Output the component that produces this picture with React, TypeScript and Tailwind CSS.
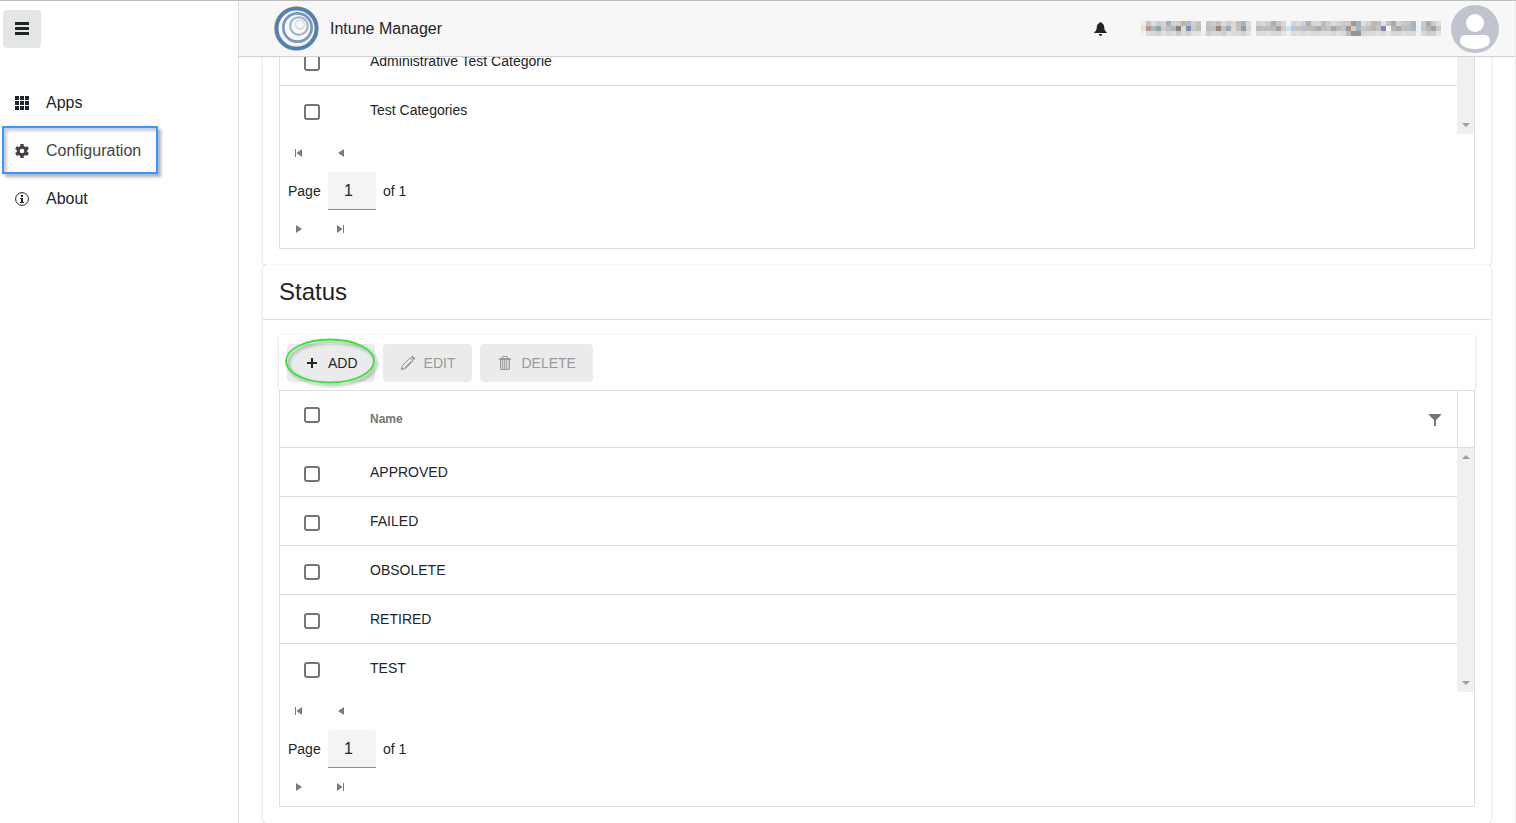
import { useState } from 'react';

const categories = ['Administrative Test Categorie', 'Test Categories'];
const statuses = ['APPROVED', 'FAILED', 'OBSOLETE', 'RETIRED', 'TEST'];

// Blocks of the obscured account name, one list for each line
const mask = [
  ['#f0ece9', '#c2c5c6', '#d9dcda', '#c8cfd0', '#d4d4d0', '#a9afba', '#cfd3d6', '#d6cfc9', '#bdb5a4', '#adbccb', '#d2d0d2', '#c4c4c6', '#f7f7f7', '#c4c4c5', '#cfcac5', '#c8bfb9', '#d8dbdc', '#cbced1', '#dcd9d1', '#c4bdb0', '#aab2c0', '#d9dbdc', '#f6f8f8', '#cdd2d2', '#d5d8d3', '#ccccca', '#a9adb8', '#c7c7c2', '#d3dadd', '#f0f5f8', '#cfd4da', '#dcdcdc', '#cfcfcf', '#adb0b1', '#d6d5d0', '#d5dbdd', '#b9bdbf', '#c7ccce', '#dcd9d4', '#d3d3d3', '#c8c8c4', '#d1cbc5', '#9e9a98', '#a9aeb8', '#dcdeda', '#d4d2cf', '#bfb8b8', '#c0bfc0', '#dfe3e7', '#c4c2be', '#a8a9a8', '#d4d4d4', '#c5c7c9', '#c0c1c2', '#afb1b3', '#eff4f7', '#cccbc9', '#a8abb1', '#c8cbc9', '#d9dbe0'],
  ['#e4dfda', '#ac9c93', '#a9b9c1', '#9aa09f', '#cbcccf', '#c5bfbb', '#b5b6b8', '#887f80', '#dedacd', '#7e93ae', '#c9c9c5', '#bcbdbf', '#f7f7f7', '#bdbdbd', '#c1bfc0', '#928984', '#c2c1c0', '#a0a9b4', '#dadbd8', '#bec0c1', '#8f9cae', '#d8d6cf', '#f3f5f5', '#b7b9bc', '#bdbebd', '#bcbebc', '#b9bbbe', '#ac9f99', '#cfcfcf', '#cce0ef', '#bcc4ce', '#c8c3b7', '#b5c1d0', '#bfbdbb', '#b6b7b8', '#a9acae', '#bbbdbd', '#c3c2c1', '#aaa7a5', '#b9b9bc', '#c1c2c1', '#9a9896', '#d8cdbc', '#a3b6c5', '#c5c5cb', '#c4bfbd', '#b9b6b6', '#c6c0bf', '#7c8ca5', '#fbfdfc', '#b4b7b9', '#a6a8a9', '#bfc0bd', '#b9bdbd', '#a5b6c2', '#edf2f5', '#c4c4c7', '#b9b4a8', '#9aa3b2', '#cdc9c6'],
  ['#f2f1ee', '#dedad7', '#cfdbdf', '#cbd2d1', '#e2e1dd', '#d3d4d9', '#dcdcd8', '#c9c9cc', '#dbd8d0', '#cbd0dc', '#dfdfdf', '#e0e3e5', '#ededed', '#cecece', '#dcd9d3', '#d7d7d5', '#c7ced5', '#e1e1df', '#dedbd4', '#d9dcdf', '#ccd1da', '#e3e3df', '#f5f6f4', '#dddcd6', '#d8dce0', '#e1e0da', '#d6d8dd', '#dad7d0', '#e0e2e5', '#e9f1f6', '#dbdedf', '#dfe0dc', '#d5dbe0', '#dfded9', '#d8dadd', '#dcdbd6', '#dce0e2', '#dedcd7', '#d5d8da', '#e0dfda', '#dadada', '#c5bab5', '#929498', '#8f96a2', '#d4d5d7', '#dddad6', '#d9dcdf', '#dfded9', '#d4dadf', '#e4e5e2', '#d9d8d5', '#d4d8de', '#dfdeda', '#d5d9dc', '#d5dcdf', '#eff2f3', '#d9dadc', '#cfcdc7', '#cdd1d8', '#e0e3e8'],
];

const checkboxClass =
  'block size-4 appearance-none rounded-[3px] border-2 border-[#757575] bg-white checked:bg-[#757575]';
const toolButtonClass = 'flex h-[38px] items-center gap-[9px] rounded bg-[#ebebeb] pl-[18px] pr-[17px] disabled:text-[#999]';

function Logo() {
  return (
    <svg viewBox="0 0 46 46" className="size-[45px]" fill="none" aria-hidden="true">
      <circle cx="23" cy="23" r="20.5" stroke="#8b8f94" strokeWidth="4.4" />
      <circle cx="23" cy="23" r="20.5" stroke="#4a80bb" strokeWidth="3" />
      <circle cx="24" cy="22" r="14.5" stroke="#8f9ba8" strokeWidth="2.8" />
      <circle cx="24" cy="22" r="14.5" stroke="#6f9ac9" strokeWidth="1.8" />
      <circle cx="25.5" cy="20.5" r="9" stroke="#9cb5d1" strokeWidth="2.2" />
      <circle cx="26.5" cy="19" r="4.5" stroke="#cdd5df" strokeWidth="1.4" />
    </svg>
  );
}

function Avatar() {
  return (
    <svg viewBox="0 0 48 48" className="size-12" aria-hidden="true">
      <circle cx="24" cy="24" r="24" fill="#c0c4ce" />
      <circle cx="24" cy="18" r="9" fill="#fff" />
      <path d="M15 30h18c4 0 6 2 6 6 0 5-7 8-15 8s-15-3-15-8c0-4 2-6 6-6z" fill="#fff" />
    </svg>
  );
}

function MenuIcon() {
  return (
    <svg viewBox="0 0 14 14" className="size-[14px]" fill="currentColor" aria-hidden="true">
      <path d="M0 0h14v3H0zM0 5h14v3H0zM0 10h14v3H0z" />
    </svg>
  );
}

function AppsIcon() {
  return (
    <svg viewBox="0 0 14 14" className="size-[14px]" fill="currentColor" aria-hidden="true">
      <path d="M0 0h4v4H0zM5 0h4v4H5zM10 0h4v4h-4zM0 5h4v4H0zM5 5h4v4H5zM10 5h4v4h-4zM0 10h4v4H0zM5 10h4v4H5zM10 10h4v4h-4z" />
    </svg>
  );
}

function GearIcon() {
  return (
    <svg viewBox="0 0 14 14" className="size-[14px]" aria-hidden="true">
      <g fill="currentColor">
        <circle cx="7" cy="7" r="5.3" />
        <rect x="5.3" y="0" width="3.4" height="14" rx="0.5" />
        <rect x="5.3" y="0" width="3.4" height="14" rx="0.5" transform="rotate(60 7 7)" />
        <rect x="5.3" y="0" width="3.4" height="14" rx="0.5" transform="rotate(120 7 7)" />
      </g>
      <circle cx="7" cy="7" r="2.3" fill="#fff" />
    </svg>
  );
}

function InfoIcon() {
  return (
    <svg viewBox="0 0 14 14" className="size-[14px]" aria-hidden="true">
      <circle cx="7" cy="7" r="6.4" fill="none" stroke="currentColor" strokeWidth="1" />
      <path d="M6 3h2v2H6zM5 6h3v4h1v1H5v-1h1V7H5z" fill="currentColor" />
    </svg>
  );
}

function BellIcon() {
  return (
    <svg viewBox="0 0 14 14" className="size-[14px]" fill="currentColor" aria-hidden="true">
      <path d="M7.500 0c.6 0 .9.400 1 1 1.800.5 2.500 2 2.700 4 .2 2.600.6 4.200 2.600 5.200V11H1.200v-.8C3.200 9.200 3.600 7.600 3.800 5c.2-2 .9-3.500 2.700-4 .1-.6.400-1 1-1zM5.800 12h3.400c-.2 1.200-.8 2-1.700 2s-1.500-.8-1.700-2z" />
    </svg>
  );
}

function PlusIcon() {
  return (
    <svg viewBox="0 0 14 14" className="size-[14px]" fill="currentColor" aria-hidden="true">
      <path d="M6 2h2v4h4v2H8v4H6V8H2V6h4z" />
    </svg>
  );
}

function PencilIcon() {
  return (
    <svg viewBox="0 0 14 14" className="size-[14px]" aria-hidden="true">
      <path d="M.5 13.500l1-4 7.500-7.500 3 3-7.500 7.500z" fill="none" stroke="currentColor" strokeWidth="1" />
      <path d="M9.700 1.300l.9-.9c.5-.5 1.100-.5 1.600 0l1.400 1.400c.5.5.5 1.100 0 1.600l-.9.9zM0 14l.8-3 2.200 2.200zM3.500 11.500L10 5l1 1-6.500 6.500z" fill="currentColor" />
    </svg>
  );
}

function TrashIcon() {
  return (
    <svg viewBox="0 0 14 14" className="size-[14px]" aria-hidden="true">
      <path d="M3 4h8v9H3z" fill="#e2d3ba" />
      <path d="M4 4h1v9H4zM6 4h1v9H6zM8 4h1v9H8z" fill="#a9a9a9" />
      <path d="M4 2V1l1-1h4l1 1v1h2l1 1v1H1V3l1-1zM5 1v1h4V1zM2 4h1v9h8V4h1v9l-1 1H3l-1-1z" fill="currentColor" fillRule="evenodd" />
    </svg>
  );
}

function FilterIcon() {
  return (
    <svg viewBox="0 0 14 14" className="size-[14px]" fill="currentColor" aria-hidden="true">
      <path d="M1 2h12v1L8 8v6H6V8L1 3z" />
    </svg>
  );
}

function PagerIcon({ d }: { d: string }) {
  return (
    <svg viewBox="0 0 8 8" className="size-2" fill="currentColor" aria-hidden="true">
      <path d={d} />
    </svg>
  );
}

function PagerButton({ label, d }: { label: string; d: string }) {
  return (
    <button type="button" aria-label={label} className="flex h-[38px] w-[42px] items-center pl-[15px] text-[#7b7b7b]">
      <PagerIcon d={d} />
    </button>
  );
}

function Pager({ id }: { id: string }) {
  return (
    <div className="text-sm">
      <div className="flex">
        <PagerButton label="First page" d="M0 0h1v8H0zM7 0v8L1.500 4z" />
        <PagerButton label="Previous page" d="M7 0v8L1 4z" />
      </div>
      <div className="flex h-[38px] items-center pl-2">
        <label htmlFor={id} className="w-10">Page</label>
        <input
          id={id}
          type="text"
          defaultValue="1"
          className="h-[38px] w-12 rounded-t border-b border-[#8c8c8c] bg-[#f4f4f4] px-4 text-base outline-none"
        />
        <span className="pl-[7px]">of 1</span>
      </div>
      <div className="flex">
        <PagerButton label="Next page" d="M1 0v8l6-4z" />
        <PagerButton label="Last page" d="M0 0v8l5.500-4zM6 0h1v8H6z" />
      </div>
    </div>
  );
}

function Rows({ names }: { names: string[] }) {
  return (
    <table className="flex-1 border-separate border-spacing-0 text-sm">
      <tbody>
        {names.map((name) => (
          <tr key={name} className="group">
            <td className="h-[49px] w-[66px] border-b border-[#dedede] pl-6 pt-1 group-last:h-12 group-last:border-0">
              <input type="checkbox" aria-label={name} className={checkboxClass} />
            </td>
            <td className="border-b border-[#dedede] pl-6 group-last:border-0">{name}</td>
          </tr>
        ))}
      </tbody>
    </table>
  );
}

function ScrollTrack({ up }: { up: boolean }) {
  return (
    <div className="flex w-[17px] shrink-0 flex-col items-center justify-between bg-[#f0f0f0] py-[5px] text-[#a0a0a0]">
      {up ? <PagerIcon d="M0 6h8L4 2z" /> : <span />}
      <PagerIcon d="M0 2h8L4 6z" />
    </div>
  );
}

export default function App() {
  const [allChecked, setAllChecked] = useState(false);

  return (
    <div className="flex h-screen overflow-hidden border-t border-[#bdbdbd] bg-white font-['Liberation_Sans',Arial,sans-serif] text-[#212529]">
      {/* Sidebar */}
      <aside className="w-[239px] shrink-0 border-r border-[#dedede]">
        <button
          type="button"
          aria-label="Toggle menu"
          className="ml-[3px] mt-[9px] flex size-[38px] items-center justify-center rounded bg-[#e4e6e5]"
        >
          <MenuIcon />
        </button>
        <nav className="mt-[30px] text-base">
          <a href="#apps" className="flex h-12 items-center gap-[17px] pl-[15px] pt-[2px]">
            <AppsIcon />
            Apps
          </a>
          <a
            href="#configuration"
            className="ml-[2px] flex h-12 w-[156px] items-center gap-[17px] border-2 border-[#3399ff] pl-[11px] pt-[2px] text-[#424242] shadow-[3px_3px_3px_rgba(0,0,0,0.3),inset_3px_3px_3px_rgba(0,0,0,0.2)]"
          >
            <GearIcon />
            Configuration
          </a>
          <a href="#about" className="flex h-12 items-center gap-[17px] pl-[15px] pt-[2px]">
            <InfoIcon />
            About
          </a>
        </nav>
      </aside>

      <div className="min-w-0 flex-1 border-r border-[#ececec]">
        {/* Header */}
        <header className="relative z-10 flex h-14 items-center border-b border-[#d0d0d0] bg-[#f7f7f7] pl-[35px] pr-4">
          <Logo />
          <h1 className="pl-[11px] text-base">Intune Manager</h1>
          <button type="button" aria-label="Notifications" className="ml-auto mr-[34px]">
            <BellIcon />
          </button>
          <svg viewBox="0 0 300 15" className="mr-[10px] h-[15px] w-[300px]" shapeRendering="crispEdges" aria-hidden="true">
            {mask.map((line, y) =>
              line.map((fill, x) => <rect key={`${x}-${y}`} x={x * 5} y={y * 5} width="5" height="5" fill={fill} />)
            )}
          </svg>
          <Avatar />
        </header>

        <main className="-mt-5 px-6">
          {/* Categories */}
          <section className="rounded px-4 pb-4 shadow-[0_1px_3px_rgba(0,0,0,0.2)]">
            <div className="border border-t-0 border-[#dedede]">
              <div className="flex">
                <Rows names={categories} />
                <ScrollTrack up={false} />
              </div>
              <Pager id="categories-page" />
            </div>
          </section>

          {/* Status */}
          <section className="rounded bg-white shadow-[0_1px_3px_rgba(0,0,0,0.2)]">
            <h2 className="border-b border-[#dedede] px-4 py-[11px] text-2xl">Status</h2>
            <div className="p-4 pt-[15px]">
              <div className="flex h-[55px] items-center gap-2 px-2 text-sm shadow-[0_1px_3px_rgba(0,0,0,0.2)]">
                <div className="relative">
                  <button type="button" className={toolButtonClass}>
                    <PlusIcon />
                    ADD
                  </button>
                  {/* Highlight ring */}
                  <svg viewBox="0 0 100 56" className="pointer-events-none absolute -left-1 -top-2 h-14 w-[100px]" fill="none" aria-hidden="true">
                    <defs>
                      <filter id="ring-shadow" x="-20%" y="-20%" width="140%" height="140%">
                        <feDropShadow dx="2.500" dy="2.500" stdDeviation="1.5" floodColor="#000" floodOpacity="0.4" />
                      </filter>
                    </defs>
                    <ellipse cx="47" cy="25" rx="44" ry="21.500" stroke="#2ee82e" strokeWidth="1.8" filter="url(#ring-shadow)" />
                  </svg>
                </div>
                <button type="button" disabled className={toolButtonClass}>
                  <PencilIcon />
                  EDIT
                </button>
                <button type="button" disabled className={toolButtonClass}>
                  <TrashIcon />
                  DELETE
                </button>
              </div>

              <div className="border border-[#dedede] bg-white">
                <div className="flex h-[57px] border-b border-[#dedede] pr-4 text-xs text-[#757575]">
                  <div className="w-[66px] pl-6 pt-4">
                    <input
                      type="checkbox"
                      aria-label="Select all"
                      checked={allChecked}
                      onChange={(e) => setAllChecked(e.target.checked)}
                      className={checkboxClass}
                    />
                  </div>
                  <div className="flex flex-1 items-center justify-between border-r border-[#dedede] pl-6 pr-[15px] font-bold">
                    Name
                    <button type="button" aria-label="Filter by name">
                      <FilterIcon />
                    </button>
                  </div>
                </div>
                <div className="flex">
                  <Rows names={statuses} />
                  <ScrollTrack up />
                </div>
                <Pager id="status-page" />
              </div>
            </div>
          </section>
        </main>
      </div>
    </div>
  );
}
